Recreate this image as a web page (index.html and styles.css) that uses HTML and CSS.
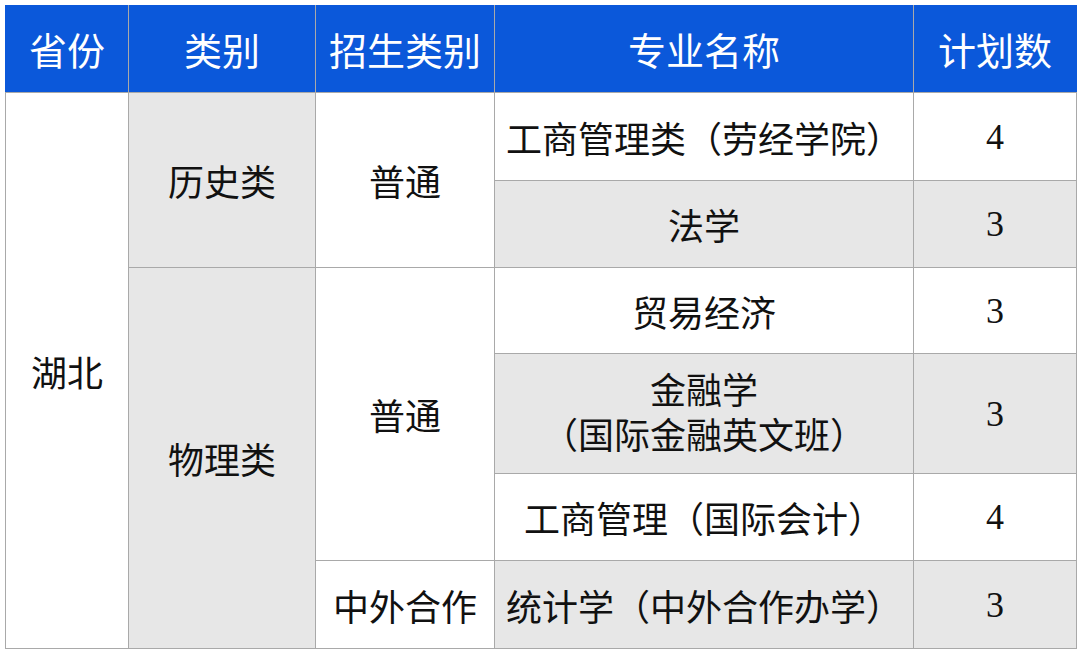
FILE: index.html
```html
<!DOCTYPE html>
<html lang="zh">
<head>
<meta charset="utf-8">
<link rel="stylesheet" href="styles.css">
</head>
<body>
<table class="plan">
  <colgroup>
    <col class="c1"><col class="c2"><col class="c3"><col class="c4"><col class="c5">
  </colgroup>
  <thead>
    <tr class="h"><th>省份</th><th>类别</th><th>招生类别</th><th>专业名称</th><th>计划数</th></tr>
  </thead>
  <tbody>
    <tr class="r1">
      <td rowspan="6">湖北</td>
      <td rowspan="2" class="g">历史类</td>
      <td rowspan="2">普通</td>
      <td>工商管理类（劳经学院）</td>
      <td class="n">4</td>
    </tr>
    <tr class="r2">
      <td class="g">法学</td>
      <td class="g n">3</td>
    </tr>
    <tr class="r3">
      <td rowspan="4" class="g">物理类</td>
      <td rowspan="3">普通</td>
      <td>贸易经济</td>
      <td class="n">3</td>
    </tr>
    <tr class="r4">
      <td class="g two"><span class="line">金融学</span><span class="line">（国际金融英文班）</span></td>
      <td class="g n">3</td>
    </tr>
    <tr class="r5">
      <td>工商管理（国际会计）</td>
      <td class="n">4</td>
    </tr>
    <tr class="r6">
      <td>中外合作</td>
      <td class="g">统计学（中外合作办学）</td>
      <td class="g n">3</td>
    </tr>
  </tbody>
</table>
</body>
</html>
```

FILE: styles.css
```css
html, body {
  margin: 0;
  padding: 0;
  background: #ffffff;
}
body {
  padding: 5px 0 0 5px;
}
.plan {
  border-collapse: collapse;
  table-layout: fixed;
  width: 1071px;
  font-family: "Noto Sans CJK SC", "Noto Sans", sans-serif;
  color: #111111;
}
.c1 { width: 123px; }
.c2 { width: 187px; }
.c3 { width: 179px; }
.c4 { width: 419px; }
.c5 { width: 163px; }
.plan th, .plan td {
  border: 1.5px solid #a9a9a9;
  text-align: center;
  vertical-align: middle;
  padding: 0;
  font-size: 36px;
  font-weight: normal;
  line-height: 44px;
  white-space: nowrap;
}
.plan th {
  background: #0b58da;
  color: #ffffff;
  font-size: 38px;
  border-top-color: #0b58da;
}
.plan th:first-child { border-left-color: #0b58da; }
.plan th:last-child { border-right-color: #0b58da; }
.h { height: 87px; }
.r1 { height: 88px; }
.r2 { height: 87px; }
.r3 { height: 86px; }
.r4 { height: 120px; }
.r5 { height: 87px; }
.r6 { height: 88px; }
.g { background: #e7e7e7; }
.two {
  font-family: "Liberation Sans", "Noto Sans CJK SC", sans-serif;
}
.line {
  display: block;
  line-height: 45px;
}
.n {
  font-family: "Liberation Serif", serif;
  font-size: 34px;
}
```
